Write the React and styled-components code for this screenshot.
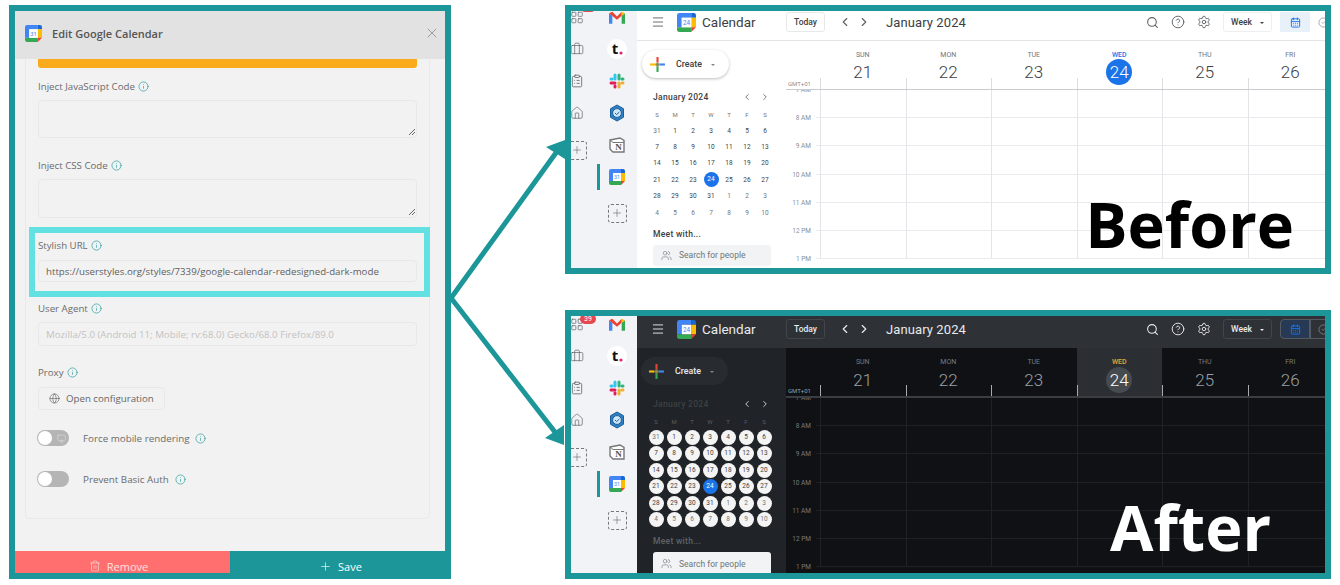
import React from "react";
import styled, { createGlobalStyle } from "styled-components";
import {
  Briefcase,
  CalendarDays,
  ChevronLeft,
  ChevronRight,
  CircleCheck,
  CircleHelp,
  ClipboardList,
  Globe,
  House,
  Info,
  LayoutGrid,
  Menu,
  Monitor,
  Plus,
  Search,
  Settings,
  Trash2,
  Users,
  X,
} from "lucide-react";

const TEAL = "#1c9699";

const GlobalStyle = createGlobalStyle`
  html, body { margin: 0; background: #fff; overflow: hidden; }
  * { box-sizing: border-box; }
`;

const Page = styled.div`
  display: flex;
  align-items: flex-start;
  width: 1340px;
  height: 585px;
  padding: 5px 0 0 9px;
`;

/* ---------- settings panel ---------- */

const Panel = styled.section`
  width: 442px;
  height: 574px;
  display: flex;
  flex-direction: column;
  border: 6px solid ${TEAL};
  background: #f2f2f2;
  font-family: "Open Sans", sans-serif;
  color: #666;
`;

const PanelHeader = styled.header`
  display: flex;
  align-items: center;
  height: 48px;
  flex: none;
  padding: 0 5px 4px 10px;
  background: #e2e2e2;
`;

const PanelTitle = styled.h1`
  flex: 1;
  margin: 0 0 0 10px;
  font-size: 11px;
  font-weight: 600;
  color: #555;
`;

const CloseButton = styled.span`
  display: flex;
  color: #999;
`;

const Card = styled.div`
  flex: 1;
  margin: 0 15px 32px 10px;
  padding: 0 12px;
  border: 1px solid #e9e9e9;
  border-top: none;
  border-radius: 0 0 5px 5px;
`;

const WarningBar = styled.div`
  height: 9px;
  background: #f9ab1c;
  border-radius: 0 0 3px 3px;
`;

const Label = styled.label`
  display: flex;
  align-items: center;
  gap: 3px;
  height: 20px;
  margin-top: ${(p) => p.$top}px;
  font-size: 9.7px;
  color: #6b6b6b;
  svg { color: ${TEAL}; }
`;

const TextArea = styled.div`
  position: relative;
  height: ${(p) => p.$height}px;
  margin-top: 4px;
  border: 1px solid #e8e8e8;
  border-radius: 4px;
  &::after {
    content: "";
    position: absolute;
    right: 1px;
    bottom: 2px;
    width: 6px;
    height: 6px;
    background: linear-gradient(135deg, transparent 45%, #666 45%, #666 55%, transparent 55%, transparent 70%, #666 70%, #666 80%, transparent 80%);
  }
`;

const Input = styled.div`
  display: flex;
  align-items: center;
  height: ${(p) => p.$height}px;
  margin-top: ${(p) => p.$top}px;
  padding-left: 7px;
  border: 1px solid #e8e8e8;
  border-radius: 4px;
  font-size: 9.7px;
  white-space: nowrap;
  color: ${(p) => (p.$muted ? "#c2c2c2" : "#5f5f5f")};
`;

const Highlight = styled.div`
  height: 70px;
  margin: 9px -13px 0 -9px;
  padding: 2px 7px 0 3px;
  border: 6px solid #62e0e2;
`;

const GhostButton = styled.div`
  display: flex;
  align-items: center;
  gap: 6px;
  width: 127px;
  height: 23px;
  margin-top: 5px;
  padding-left: 10px;
  border: 1px solid #e8e8e8;
  border-radius: 4px;
  font-size: 9.7px;
  color: #666;
`;

const ToggleRow = styled.div`
  display: flex;
  align-items: center;
  height: 16px;
  margin-top: ${(p) => p.$top}px;
  font-size: 9.8px;
  color: #6b6b6b;
  svg.info { color: ${TEAL}; margin-left: ${(p) => p.$infoGap}px; }
`;

const Toggle = styled.span`
  position: relative;
  flex: none;
  display: flex;
  align-items: center;
  justify-content: flex-end;
  width: 32px;
  height: 16px;
  margin: 0 14px 0 -1px;
  padding-right: 3px;
  border-radius: 8px;
  background: #b5b5b5;
  color: #d4d4d4;
  &::before {
    content: "";
    position: absolute;
    left: 1px;
    top: 1px;
    width: 14px;
    height: 14px;
    border-radius: 50%;
    background: #fff;
  }
`;

const PanelFooter = styled.footer`
  display: flex;
  flex: none;
  height: 22px;
  margin-right: -6px;
  font-size: 11px;
`;

const RemoveButton = styled.div`
  flex: none;
  width: 215px;
  height: 22px;
  display: flex;
  align-items: center;
  justify-content: center;
  gap: 6px;
  padding: 8px 8px 0 0;
  background: #ff6f6f;
  color: #ffe0e0;
`;

const SaveButton = styled.div`
  flex: 1;
  height: 28px;
  display: flex;
  align-items: center;
  justify-content: center;
  gap: 6px;
  padding-top: 2px;
  background: ${TEAL};
  color: #fff;
`;

/* ---------- arrows ---------- */

const ArrowLayer = styled.svg`
  flex: none;
  display: block;
`;

/* ---------- calendar shots ---------- */

const ShotStack = styled.div`
  display: flex;
  flex-direction: column;
  gap: 36px;
  width: 766px;
`;

const Shot = styled.section`
  position: relative;
  display: flex;
  height: 269px;
  border: 6px solid ${TEAL};
  overflow: hidden;
  font-family: Roboto, sans-serif;
  background: ${(p) => (p.$dark ? "#202327" : "#fff")};
`;

const Rail = styled.nav`
  flex: none;
  display: flex;
  width: 66px;
  padding-top: ${(p) => (p.$dark ? 2 : 0)}px;
  background: #f1f3f7;
`;

const RailColumn = styled.div`
  flex: none;
  width: ${(p) => p.$width}px;
  margin-left: ${(p) => p.$left}px;
  margin-top: -10px;
`;

const RailItem = styled.div`
  position: relative;
  display: flex;
  align-items: center;
  justify-content: center;
  height: 32px;
  margin-top: ${(p) => p.$top || 0}px;
  color: #5f6368;
`;

const RailBadge = styled.span`
  position: absolute;
  top: ${(p) => (p.$dark ? 6 : 1)}px;
  left: 10px;
  width: 16px;
  height: 10px;
  border-radius: 6px;
  background: #e5484d;
  color: #fff;
  font-size: 7px;
  line-height: 10px;
  text-align: center;
`;

const ActiveMark = styled.span`
  position: absolute;
  left: 0;
  top: 3px;
  width: 3px;
  height: 26px;
  background: ${TEAL};
`;

const AddTile = styled.span`
  flex: none;
  display: flex;
  align-items: center;
  justify-content: center;
  width: 19px;
  height: 19px;
  border: 1px dashed #777;
  border-radius: 3px;
  color: #666;
`;

const Main = styled.div`
  flex: 1;
  min-width: 0;
  display: flex;
  flex-direction: column;
`;

const TopBar = styled.header`
  flex: none;
  display: flex;
  align-items: center;
  height: ${(p) => (p.$dark ? 32 : 30)}px;
  padding-bottom: ${(p) => (p.$dark ? 6 : 7)}px;
  border-bottom: ${(p) => (p.$dark ? "none" : "1px solid #e2e4e6")};
  background: ${(p) => (p.$dark ? "#2e3236" : "#fff")};
  color: ${(p) => (p.$dark ? "#e8eaed" : "#5f6368")};
`;

const Brand = styled.div`
  flex: none;
  display: flex;
  align-items: center;
  width: 149px;
  padding-left: 14px;
  svg + svg { margin-left: 12px; }
`;

const BrandName = styled.span`
  margin-left: 6px;
  font-size: 13.5px;
  color: ${(p) => (p.$dark ? "#e8eaed" : "#3c4043")};
`;

const TodayButton = styled.span`
  flex: none;
  width: 39px;
  height: 20px;
  border: 1px solid ${(p) => (p.$dark ? "#41464b" : "#e6e8ea")};
  border-radius: 3px;
  font-size: 8.5px;
  font-weight: 500;
  line-height: 18px;
  text-align: center;
  color: ${(p) => (p.$dark ? "#e8eaed" : "#3c4043")};
`;

const NavArrows = styled.span`
  flex: none;
  display: flex;
  gap: 5px;
  margin-left: 13px;
`;

const MonthTitle = styled.span`
  margin-left: 15px;
  font-size: 13px;
  letter-spacing: 0.1px;
  color: ${(p) => (p.$dark ? "#e8eaed" : "#3c4043")};
`;

const TopActions = styled.div`
  flex: none;
  display: flex;
  align-items: center;
  gap: 12px;
  margin-left: auto;
  margin-right: -11px;
`;

const WeekSelect = styled.span`
  display: flex;
  align-items: center;
  justify-content: center;
  gap: 8px;
  width: 49px;
  height: 20px;
  border: 1px solid ${(p) => (p.$dark ? "#41464b" : "#eceef0")};
  border-radius: 3px;
  font-size: 8.5px;
  font-weight: 500;
  color: ${(p) => (p.$dark ? "#e8eaed" : "#3c4043")};
  &::after {
    content: "";
    border: 2.5px solid transparent;
    border-top-color: currentColor;
    margin-top: 3px;
  }
`;

const ViewSwitch = styled.span`
  display: flex;
  height: 20px;
  margin-left: -4px;
`;

const ViewOption = styled.span`
  display: flex;
  align-items: center;
  justify-content: center;
  width: ${(p) => (p.$active ? 30 : 26)}px;
  background: ${(p) => (p.$active ? (p.$dark ? "#263a55" : "#e8f0fa") : "transparent")};
  color: ${(p) => (p.$active ? "#1a73e8" : "#8a8f94")};
  ${(p) => p.$dark && `border: 1px solid #555b61;`}
  ${(p) => p.$dark && p.$active && "border-radius: 4px 0 0 4px;"}
`;

const Workspace = styled.div`
  flex: 1;
  min-height: 0;
  display: flex;
`;

const Sidebar = styled.aside`
  flex: none;
  width: 149px;
  padding-top: 9px;
  background: ${(p) => (p.$dark ? "#202327" : "#fff")};
`;

const CreateButton = styled.div`
  display: flex;
  align-items: center;
  width: 87px;
  height: 28px;
  margin-left: ${(p) => (p.$dark ? 4 : 5)}px;
  padding-left: 7px;
  border-radius: 14px;
  background: ${(p) => (p.$dark ? "#282c30" : "#fff")};
  box-shadow: ${(p) => (p.$dark ? "none" : "0 1px 3px rgba(60, 64, 67, 0.35)")};
  font-size: 8.8px;
  font-weight: 500;
  color: ${(p) => (p.$dark ? "#e8eaed" : "#3c4043")};
  span { margin-left: 10px; }
  &::after {
    content: "";
    margin: 3px 0 0 9px;
    border: 2.5px solid transparent;
    border-top-color: #80868b;
  }
`;

const MiniHeader = styled.div`
  display: flex;
  align-items: center;
  height: 14px;
  margin-top: 12px;
  padding: 0 16px;
  font-size: 8.5px;
  font-weight: 500;
  letter-spacing: 0.3px;
  color: ${(p) => (p.$dark ? "#3d4145" : "#3c4043")};
  strong { flex: 1; font-weight: 500; }
  svg { color: ${(p) => (p.$dark ? "#e8eaed" : "#5f6368")}; margin-left: 8px; }
`;

const MiniGrid = styled.div`
  display: grid;
  grid-template-columns: repeat(7, 18px);
  grid-auto-rows: 16.4px;
  margin-top: 2px;
  padding-left: ${(p) => (p.$dark ? 10 : 11)}px;
`;

const MiniHead = styled.span`
  display: flex;
  align-items: center;
  justify-content: center;
  font-size: 6px;
  color: ${(p) => (p.$dark ? "#5a5e62" : "#70757a")};
`;

const MiniDay = styled.span`
  justify-self: center;
  align-self: center;
  width: ${(p) => (p.$dark || p.$today ? 15 : 14)}px;
  height: ${(p) => (p.$dark || p.$today ? 15 : 14)}px;
  border-radius: 50%;
  font-size: 6.5px;
  line-height: ${(p) => (p.$dark || p.$today ? 15 : 14)}px;
  text-align: center;
  background: ${(p) => (p.$today ? "#1a73e8" : p.$dark ? "#f4f4f4" : "transparent")};
  color: ${(p) => (p.$today ? "#fff" : p.$muted ? "#70757a" : "#3c4043")};
`;

const MeetTitle = styled.div`
  margin-top: 6px;
  padding-left: 16px;
  font-size: 8.5px;
  font-weight: 500;
  line-height: 14px;
  letter-spacing: 0.3px;
  color: ${(p) => (p.$dark ? "#5f6368" : "#3c4043")};
`;

const PeopleSearch = styled.div`
  display: flex;
  align-items: center;
  gap: 7px;
  width: 118px;
  height: ${(p) => (p.$dark ? 24 : 21)}px;
  margin: 4px 0 0 16px;
  padding-left: 8px;
  border-radius: 3px;
  background: #f1f3f4;
  font-size: 8.5px;
  color: #70757a;
`;

const Schedule = styled.div`
  position: relative;
  flex: 1;
  min-width: 0;
  display: flex;
  flex-direction: column;
  overflow: hidden;
  background: ${(p) => (p.$dark ? "#0f1114" : "#fff")};
`;

const DayHeader = styled.div`
  flex: none;
  display: grid;
  grid-template-columns: 34px repeat(6, 85.5px);
  height: ${(p) => (p.$dark ? 50 : 49)}px;
  border-bottom: ${(p) => (p.$dark ? "2px solid #3a3e42" : "1px solid #c9cbce")};
`;

const Gmt = styled.span`
  align-self: end;
  padding: 0 0 2px 2px;
  font-size: 6px;
  color: ${(p) => (p.$dark ? "#9aa0a6" : "#8a8f94")};
`;

const DayCell = styled.div`
  position: relative;
  display: flex;
  flex-direction: column;
  align-items: center;
  padding-top: 9px;
  background: ${(p) => (p.$dark && p.$today ? "#2b2f33" : "transparent")};
  &::before {
    content: "";
    position: absolute;
    left: 0;
    bottom: 0;
    width: 1px;
    height: 11px;
    background: ${(p) => (p.$dark ? "#a8abae" : "#dadce0")};
  }
`;

const DayName = styled.span`
  font-size: 7px;
  line-height: 10px;
  font-weight: ${(p) => (p.$today ? 500 : 400)};
  color: ${(p) => (p.$today ? (p.$dark ? "#e3a83a" : "#1a73e8") : p.$dark ? "#777b80" : "#70757a")};
`;

const DayNumber = styled.span`
  width: 26px;
  height: 26px;
  margin-top: ${(p) => (p.$dark ? 0 : -1)}px;
  border-radius: 50%;
  font-size: 17px;
  font-weight: 300;
  line-height: 26px;
  text-align: center;
  background: ${(p) => (!p.$today ? "transparent" : p.$dark ? "#464b50" : "#1a73e8")};
  color: ${(p) => (p.$today ? "#fff" : p.$dark ? "#9aa0a6" : "#3c4043")};
`;

const HourList = styled.div`
  flex: 1;
  min-height: 0;
  overflow: hidden;
`;

const HourRow = styled.div`
  display: grid;
  grid-template-columns: 34px repeat(6, 85.5px);
  height: ${(p) => p.$height}px;
`;

const HourLabel = styled.span`
  position: relative;
  align-self: end;
  height: 0;
  font-size: 6.5px;
  color: ${(p) => (p.$dark ? "#777b80" : "#8a8f94")};
  em {
    position: absolute;
    right: 9px;
    bottom: -4px;
    line-height: 8px;
    font-style: normal;
    white-space: nowrap;
  }
  &::after {
    content: "";
    position: absolute;
    right: 0;
    bottom: 0;
    width: 4px;
    height: 1px;
    background: ${(p) => (p.$dark ? "#1f2225" : "#e8eaed")};
  }
`;

const Slot = styled.div`
  border-left: 1px solid ${(p) => (p.$dark ? "#1f2225" : "#e3e5e8")};
  border-bottom: 1px solid ${(p) => (p.$dark ? "#1f2225" : "#e8eaed")};
`;

const Caption = styled.div`
  position: absolute;
  right: ${(p) => (p.$dark ? 54 : 31)}px;
  bottom: ${(p) => (p.$dark ? 11 : 9)}px;
  font-family: "Open Sans", sans-serif;
  font-size: 63px;
  font-weight: 700;
  line-height: 70px;
  color: ${(p) => (p.$dark ? "#fff" : "#000")};
`;

/* ---------- drawn logos ---------- */

const CalendarLogo = ({ size, day }) => (
  <svg width={size} height={size} viewBox="0 0 24 24">
    <path d="M3 0h15v6H6v12H0V3a3 3 0 0 1 3-3z" fill="#4285f4" />
    <path d="M18 0h3a3 3 0 0 1 3 3v3h-6z" fill="#1967d2" />
    <rect x="18" y="6" width="6" height="12" fill="#fbbc04" />
    <path d="M0 18h18v6H3a3 3 0 0 1-3-3z" fill="#34a853" />
    <path d="M18 18h6l-6 6z" fill="#ea4335" />
    <rect x="6" y="6" width="12" height="12" fill="#fff" />
    <text x="12" y="15" fontSize="8" textAnchor="middle" fill="#4285f4" fontFamily="Roboto, sans-serif">
      {day}
    </text>
  </svg>
);

const GmailLogo = () => (
  <svg width="16" height="13" viewBox="0 0 24 19">
    <path d="M0 3v16h5V7z" fill="#4285f4" />
    <path d="M24 3v16h-5V7z" fill="#34a853" />
    <path d="M0 3l5-2 7 7 7-7v6l-7 6L0 3z" fill="#ea4335" />
    <path d="M19 1l5 2-5 4z" fill="#fbbc04" />
  </svg>
);

const TrelloLogo = () => (
  <svg width="20" height="20" viewBox="0 0 20 20">
    <circle cx="10" cy="10" r="10" fill="#fff" />
    <text x="8" y="15" fontSize="15" fontWeight="700" textAnchor="middle" fill="#111" fontFamily="'Open Sans', sans-serif">
      t
    </text>
    <circle cx="14" cy="14" r="1.6" fill="#e0246d" />
  </svg>
);

const SlackLogo = () => (
  <svg width="16" height="16" viewBox="0 0 16 16" strokeWidth="3" strokeLinecap="round">
    <path d="M6 2v4M2 6h1" stroke="#36c5f0" />
    <path d="M14 6h-1M10 2v4" stroke="#2eb67d" />
    <path d="M10 14v-4M14 10h-1" stroke="#ecb22e" />
    <path d="M2 10h4M6 14v-1" stroke="#e01e5a" />
  </svg>
);

const HexLogo = () => (
  <svg width="16" height="18" viewBox="0 0 16 18" fill="none">
    <path d="M8 1l6.5 3.7v8.6L8 17l-6.5-3.7V4.7z" fill="#2f7fc1" stroke="#1b5e9b" />
    <circle cx="8" cy="9" r="4.4" fill="#cfe6f7" stroke="#1b5e9b" />
    <path d="M6 9l1.6 1.6L10.4 8" stroke="#1b5e9b" />
  </svg>
);

const NotionLogo = () => (
  <svg width="16" height="16" viewBox="0 0 16 16">
    <path d="M1 3l10-2 4 2.5V15H4L1 12z" fill="#fff" stroke="#777" strokeWidth="1.4" />
    <path d="M1 3l3 2.5h11" fill="none" stroke="#777" />
    <text x="9.5" y="13" fontSize="9" fontWeight="700" textAnchor="middle" fill="#555" fontFamily="'Liberation Serif', serif">
      N
    </text>
  </svg>
);

const GooglePlus = () => (
  <svg width="17" height="17" viewBox="0 0 16 16" strokeWidth="2">
    <path d="M8 1v5" stroke="#ea4335" />
    <path d="M1 8h5" stroke="#fbbc04" />
    <path d="M10 8h5" stroke="#4285f4" />
    <path d="M8 10v5" stroke="#34a853" />
    <path d="M6 8h4M8 6v4" stroke="#8b8b50" />
  </svg>
);

/* ---------- data ---------- */

const DAY_NAMES = [
  ["SUN", 21],
  ["MON", 22],
  ["TUE", 23],
  ["WED", 24],
  ["THU", 25],
  ["FRI", 26],
];

const MINI_HEAD = ["S", "M", "T", "W", "T", "F", "S"];

const MINI_DAYS = [
  31, 1, 2, 3, 4, 5, 6,
  7, 8, 9, 10, 11, 12, 13,
  14, 15, 16, 17, 18, 19, 20,
  21, 22, 23, 24, 25, 26, 27,
  28, 29, 30, 31, 1, 2, 3,
  4, 5, 6, 7, 8, 9, 10,
];

const HOURS = ["7 AM", "8 AM", "9 AM", "10 AM", "11 AM", "12 PM", "1 PM"];

/* ---------- pieces ---------- */

const CalendarShot = ({ dark, caption }) => (
  <Shot $dark={dark}>
    <Rail $dark={dark}>
      <RailColumn $width={14} $left={-1}>
        <RailItem>
          <LayoutGrid size={15} strokeWidth={1.2} />
          <RailBadge $dark={dark}>39</RailBadge>
        </RailItem>
        <RailItem><Briefcase size={16} strokeWidth={1.2} /></RailItem>
        <RailItem><ClipboardList size={16} strokeWidth={1.4} /></RailItem>
        <RailItem><House size={16} strokeWidth={1.2} /></RailItem>
        <RailItem $top={5}>
          <AddTile><Plus size={12} strokeWidth={1.2} /></AddTile>
        </RailItem>
      </RailColumn>
      <RailColumn $width={40} $left={13}>
        <RailItem><GmailLogo /></RailItem>
        <RailItem><TrelloLogo /></RailItem>
        <RailItem><SlackLogo /></RailItem>
        <RailItem><HexLogo /></RailItem>
        <RailItem><NotionLogo /></RailItem>
        <RailItem>
          <ActiveMark />
          <CalendarLogo size={16} day="31" />
        </RailItem>
        <RailItem $top={4}>
          <AddTile><Plus size={12} strokeWidth={1.2} /></AddTile>
        </RailItem>
      </RailColumn>
    </Rail>
    <Main>
      <TopBar $dark={dark}>
        <Brand>
          <Menu size={14} strokeWidth={1.6} />
          <CalendarLogo size={19} day="24" />
          <BrandName $dark={dark}>Calendar</BrandName>
        </Brand>
        <TodayButton $dark={dark}>Today</TodayButton>
        <NavArrows>
          <ChevronLeft size={14} strokeWidth={2} />
          <ChevronRight size={14} strokeWidth={2} />
        </NavArrows>
        <MonthTitle $dark={dark}>January 2024</MonthTitle>
        <TopActions>
          <Search size={13} strokeWidth={2} />
          <CircleHelp size={14} strokeWidth={1.6} />
          <Settings size={14} strokeWidth={1.6} />
          <WeekSelect $dark={dark}>Week</WeekSelect>
          <ViewSwitch>
            <ViewOption $active $dark={dark}><CalendarDays size={11} strokeWidth={2} /></ViewOption>
            <ViewOption $dark={dark}><CircleCheck size={11} strokeWidth={1.6} /></ViewOption>
          </ViewSwitch>
        </TopActions>
      </TopBar>
      <Workspace>
        <Sidebar $dark={dark}>
          <CreateButton $dark={dark}>
            <GooglePlus />
            <span>Create</span>
          </CreateButton>
          <MiniHeader $dark={dark}>
            <strong>January 2024</strong>
            <ChevronLeft size={10} strokeWidth={2} />
            <ChevronRight size={10} strokeWidth={2} />
          </MiniHeader>
          <MiniGrid $dark={dark}>
            {MINI_HEAD.map((d, i) => (
              <MiniHead key={i} $dark={dark}>{d}</MiniHead>
            ))}
            {MINI_DAYS.map((d, i) => (
              <MiniDay
                key={i}
                $dark={dark}
                $today={i === 24}
                $muted={i === 0 || i > 31}
              >
                {d}
              </MiniDay>
            ))}
          </MiniGrid>
          <MeetTitle $dark={dark}>Meet with...</MeetTitle>
          <PeopleSearch $dark={dark}>
            <Users size={11} strokeWidth={1.3} />
            Search for people
          </PeopleSearch>
        </Sidebar>
        <Schedule $dark={dark}>
          <DayHeader $dark={dark}>
            <Gmt $dark={dark}>GMT+01</Gmt>
            {DAY_NAMES.map(([name, num]) => (
              <DayCell key={name} $dark={dark} $today={num === 24}>
                <DayName $dark={dark} $today={num === 24}>{name}</DayName>
                <DayNumber $dark={dark} $today={num === 24}>{num}</DayNumber>
              </DayCell>
            ))}
          </DayHeader>
          <HourList>
            {HOURS.map((hour, i) => (
              <HourRow key={hour} $height={i === 0 ? 0 : 28.2}>
                <HourLabel $dark={dark}><em>{hour}</em></HourLabel>
                {i > 0 && DAY_NAMES.map(([name]) => <Slot key={name} $dark={dark} />)}
              </HourRow>
            ))}
          </HourList>
          <Caption $dark={dark}>{caption}</Caption>
        </Schedule>
      </Workspace>
    </Main>
  </Shot>
);

const InfoMark = ({ className }) => <Info className={className} size={11} strokeWidth={1.4} />;

export default function App() {
  return (
    <Page>
      <GlobalStyle />
      <Panel>
        <PanelHeader>
          <CalendarLogo size={17} day="31" />
          <PanelTitle>Edit Google Calendar</PanelTitle>
          <CloseButton><X size={16} strokeWidth={1.4} /></CloseButton>
        </PanelHeader>
        <Card>
          <WarningBar />
          <Label $top={8}>Inject JavaScript Code <InfoMark /></Label>
          <TextArea $height={38} />
          <Label $top={17}>Inject CSS Code <InfoMark /></Label>
          <TextArea $height={39} />
          <Highlight>
            <Label $top={0}>Stylish URL <InfoMark /></Label>
            <Input $height={22} $top={5}>https://userstyles.org/styles/7339/google-calendar-redesigned-dark-mode</Input>
          </Highlight>
          <Label $top={1}>User Agent <InfoMark /></Label>
          <Input $height={24} $top={4} $muted>Mozilla/5.0 (Android 11; Mobile; rv:68.0) Gecko/68.0 Firefox/89.0</Input>
          <Label $top={16}>Proxy <InfoMark /></Label>
          <GhostButton>
            <Globe size={11} strokeWidth={1.4} />
            Open configuration
          </GhostButton>
          <ToggleRow $top={20} $infoGap={6}>
            <Toggle><Monitor size={9} strokeWidth={2} /></Toggle>
            Force mobile rendering
            <InfoMark className="info" />
          </ToggleRow>
          <ToggleRow $top={25} $infoGap={6}>
            <Toggle />
            Prevent Basic Auth
            <InfoMark className="info" />
          </ToggleRow>
        </Card>
        <PanelFooter>
          <RemoveButton><Trash2 size={12} strokeWidth={1.2} /> Remove</RemoveButton>
          <SaveButton><Plus size={13} strokeWidth={1.2} /> Save</SaveButton>
        </PanelFooter>
      </Panel>
      <ArrowLayer width="114" height="574" viewBox="0 0 114 574">
        <path d="M0 293L107 145M0 293L107 431" stroke={TEAL} strokeWidth="5" fill="none" />
        <path d="M95 142L114 135V154Z" fill={TEAL} />
        <path d="M94 433L113 420V440Z" fill={TEAL} />
      </ArrowLayer>
      <ShotStack>
        <CalendarShot caption="Before" />
        <CalendarShot dark caption="After" />
      </ShotStack>
    </Page>
  );
}
